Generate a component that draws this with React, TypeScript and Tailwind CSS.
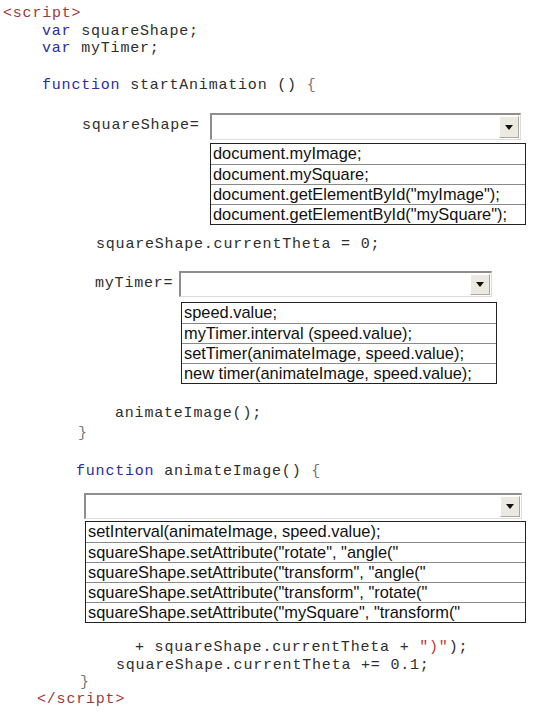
import React from "react";

const MONO = "font-['Liberation_Mono','Courier_New',monospace]";
const SANS = "font-['Liberation_Sans',Arial,sans-serif]";

function Kw({ children }: { children: React.ReactNode }) {
  return <span className="text-[#2b2ba8]">{children}</span>;
}

function Tag({ children }: { children: React.ReactNode }) {
  return <span className="text-[#9a3b3b]">{children}</span>;
}

// code line, fixed height so the blocks land where the screenshot has them
function Line({ pl, mt, children }: { pl: string; mt: string; children: React.ReactNode }) {
  return (
    <div className={`h-[17px] leading-[17px] whitespace-pre ${pl} ${mt}`}>{children}</div>
  );
}

function Combo({ width }: { width: string }) {
  return (
    <div
      className={`${width} h-full bg-white border-t-2 border-l-2 border-b border-r border-t-[#8e8e8e] border-l-[#8e8e8e] border-b-[#dcdcdc] border-r-[#dcdcdc] flex justify-end items-stretch p-[1px]`}
    >
      <div className="w-[20px] bg-[#ebe9e0] border border-t-white border-l-white border-b-[#a8a8a0] border-r-[#a8a8a0] flex items-center justify-center">
        <svg width="8" height="5" viewBox="0 0 8 5">
          <path d="M0 0 L8 0 L4 5 Z" fill="#111" />
        </svg>
      </div>
    </div>
  );
}

function OptionList({ items, className }: { items: string[]; className: string }) {
  return (
    <div className={`border border-[#222] bg-white ${SANS} text-[16.4px] text-[#111] tracking-normal ${className}`}>
      {items.map((t, i) => (
        <div
          key={i}
          className={`h-[20px] leading-[19px] pl-[2px] whitespace-pre ${i > 0 ? "border-t border-[#8a8a8a]" : ""}`}
        >
          {t}
        </div>
      ))}
    </div>
  );
}

export default function App() {
  return (
    <div className={`w-[537px] h-[717px] bg-white overflow-hidden pt-[5px] ${MONO} text-[15px] tracking-[0.8px] text-[#2e2e2e]`}>
      <Line pl="pl-[3px]" mt="mt-0">
        <Tag>&lt;script&gt;</Tag>
      </Line>
      <Line pl="pl-[42px]" mt="mt-[1px]">
        <Kw>var</Kw> squareShape;
      </Line>
      <Line pl="pl-[42px]" mt="mt-0">
        <Kw>var</Kw> myTimer;
      </Line>
      <Line pl="pl-[42px]" mt="mt-[20px]">
        <Kw>function</Kw> startAnimation () <span className="text-[#777]">{"{"}</span>
      </Line>

      <div className="mt-[19px] h-[27px] flex items-center pl-[82px]">
        <div className="w-[128px] whitespace-pre">squareShape=</div>
        <Combo width="w-[311px]" />
      </div>
      <OptionList
        className="mt-[3px] ml-[210px] w-[316px]"
        items={[
          "document.myImage;",
          "document.mySquare;",
          'document.getElementById("myImage");',
          'document.getElementById("mySquare");',
        ]}
      />

      <Line pl="pl-[96px]" mt="mt-[11px]">
        squareShape.currentTheta = 0;
      </Line>

      <div className="mt-[18px] h-[26px] flex items-center pl-[95px]">
        <div className="w-[84px] whitespace-pre">myTimer=</div>
        <Combo width="w-[313px]" />
      </div>
      <OptionList
        className="mt-[5px] ml-[181px] w-[316px]"
        items={[
          "speed.value;",
          "myTimer.interval (speed.value);",
          "setTimer(animateImage, speed.value);",
          "new timer(animateImage, speed.value);",
        ]}
      />

      <Line pl="pl-[115px]" mt="mt-[21px]">
        animateImage();
      </Line>
      <Line pl="pl-[78px]" mt="mt-[3px]">
        <span className="text-[#777]">{"}"}</span>
      </Line>
      <Line pl="pl-[76px]" mt="mt-[21px]">
        <Kw>function</Kw> animateImage() <span className="text-[#777]">{"{"}</span>
      </Line>

      <div className="mt-[13px] h-[26px] flex pl-[84px]">
        <Combo width="w-[438px]" />
      </div>
      <OptionList
        className="mt-[2px] ml-[85px] w-[441px]"
        items={[
          "setInterval(animateImage, speed.value);",
          'squareShape.setAttribute("rotate", "angle("',
          'squareShape.setAttribute("transform", "angle("',
          'squareShape.setAttribute("transform", "rotate("',
          'squareShape.setAttribute("mySquare", "transform("',
        ]}
      />

      <Line pl="pl-[135px]" mt="mt-[16px]">
        + squareShape.currentTheta + <span className="text-[#c03a3a]">")"</span>);
      </Line>
      <Line pl="pl-[116px]" mt="mt-[1px]">
        squareShape.currentTheta += 0.1;
      </Line>
      <Line pl="pl-[80px]" mt="mt-0">
        <span className="text-[#777]">{"}"}</span>
      </Line>
      <Line pl="pl-[37px]" mt="mt-0">
        <Tag>&lt;/script&gt;</Tag>
      </Line>
    </div>
  );
}
